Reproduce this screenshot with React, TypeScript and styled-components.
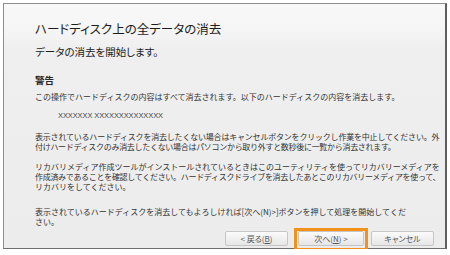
import React from "react";
import styled, { createGlobalStyle } from "styled-components";

const GlobalStyle = createGlobalStyle`
  html, body {
    margin: 0;
    padding: 0;
    background: #ffffff;
  }
  body {
    font-family: "Noto Sans CJK JP", "Liberation Sans", sans-serif;
    color: #333;
  }
`;

const Window = styled.div`
  box-sizing: border-box;
  margin: 3px 0 0 3px;
  width: 444px;
  height: 246px;
  border: 1px solid #8e8e8e;
  border-right: 2px solid #5e5e5e;
  border-bottom-color: #6e6e6e;
  background: linear-gradient(to bottom, #f8f8f8 0px, #f6f6f6 22px, #efefef 45px, #ececec 100%);
  display: flex;
  flex-direction: column;
  padding-left: 31px;
  padding-right: 11px;
`;

const Title = styled.h1`
  margin: 18px 0 0;
  font-size: 12.5px;
  line-height: 14px;
  font-weight: 400;
  color: #1c1c1c;
  white-space: nowrap;
  font-feature-settings: "palt";
`;

const Subtitle = styled.h2`
  margin: 10px 0 0;
  font-size: 10.5px;
  line-height: 12px;
  font-weight: 400;
  color: #222;
  white-space: nowrap;
  font-feature-settings: "palt";
`;

const Heading = styled.h3`
  margin: 16.5px 0 0;
  font-size: 9.5px;
  line-height: 11px;
  font-weight: 700;
  color: #2a2a2a;
`;

const Para = styled.p<{ $top: number }>`
  margin: ${(p) => p.$top}px 0 0;
  font-size: 8px;
  line-height: 10px;
  color: #333;
  white-space: nowrap;
`;

const Line = styled.span<{ $squeeze?: number }>`
  display: block;
  letter-spacing: ${(p) => (p.$squeeze ? -p.$squeeze : 0)}px;
`;

const DiskName = styled.div`
  margin: 9px 0 0 23px;
  font-family: "Liberation Sans", sans-serif;
  font-size: 7.5px;
  line-height: 10px;
  color: #444;
  letter-spacing: -0.1px;
`;

const Footer = styled.div`
  margin-top: auto;
  padding-bottom: 2px;
  display: flex;
  justify-content: flex-end;
  align-items: center;
`;

const Button = styled.button<{ $w: number; $gap: number }>`
  box-sizing: border-box;
  width: ${(p) => p.$w}px;
  height: 15px;
  margin-left: ${(p) => p.$gap}px;
  padding: 0;
  border: 1px solid #c6c6c6;
  border-radius: 2px;
  background: linear-gradient(to bottom, #fbfbfb, #e6e6e6);
  font-family: "Noto Sans CJK JP", "Liberation Sans", sans-serif;
  font-feature-settings: "palt";
  font-size: 8px;
  line-height: 13px;
  color: #555;
  white-space: nowrap;
`;

const Highlight = styled.div`
  position: relative;
  display: flex;
  margin-left: 10px;

  &::after {
    content: "";
    position: absolute;
    left: -4px;
    right: -4px;
    top: -3px;
    bottom: -5px;
    border: 3px solid #f39218;
    pointer-events: none;
  }
`;

const Key = styled.span`
  text-decoration: underline;
`;

export default function App() {
  return (
    <>
      <GlobalStyle />
      <Window>
        <Title>ハードディスク上の全データの消去</Title>
        <Subtitle>データの消去を開始します。</Subtitle>
        <Heading>警告</Heading>
        <Para $top={6.5}>
          <Line>この操作でハードディスクの内容はすべて消去されます。以下のハードディスクの内容を消去します。</Line>
        </Para>
        <DiskName>XXXXXXX XXXXXXXXXXXXXX</DiskName>
        <Para $top={10.5}>
          <Line $squeeze={0.2}>
            表示されているハードディスクを消去したくない場合はキャンセルボタンをクリックし作業を中止してください。外
          </Line>
          <Line $squeeze={0.3}>
            付けハードディスクのみ消去したくない場合はパソコンから取り外すと数秒後に一覧から消去されます。
          </Line>
        </Para>
        <Para $top={10.5}>
          <Line>リカバリメディア作成ツールがインストールされているときはこのユーティリティを使ってリカバリーメディアを</Line>
          <Line $squeeze={0.3}>
            作成済みであることを確認してください。ハードディスクドライブを消去したあとこのリカバリーメディアを使って、
          </Line>
          <Line>リカバリをしてください。</Line>
        </Para>
        <Para $top={15}>
          <Line>表示されているハードディスクを消去してもよろしければ[次へ(N)&gt;]ボタンを押して処理を開始してくだ</Line>
          <Line>さい。</Line>
        </Para>
        <Footer>
          <Button $w={63} $gap={0}>
            &lt; 戻る(<Key>B</Key>)
          </Button>
          <Highlight>
            <Button $w={66} $gap={0}>
              次へ(<Key>N</Key>) &gt;
            </Button>
          </Highlight>
          <Button $w={63} $gap={7}>
            キャンセル
          </Button>
        </Footer>
      </Window>
    </>
  );
}
